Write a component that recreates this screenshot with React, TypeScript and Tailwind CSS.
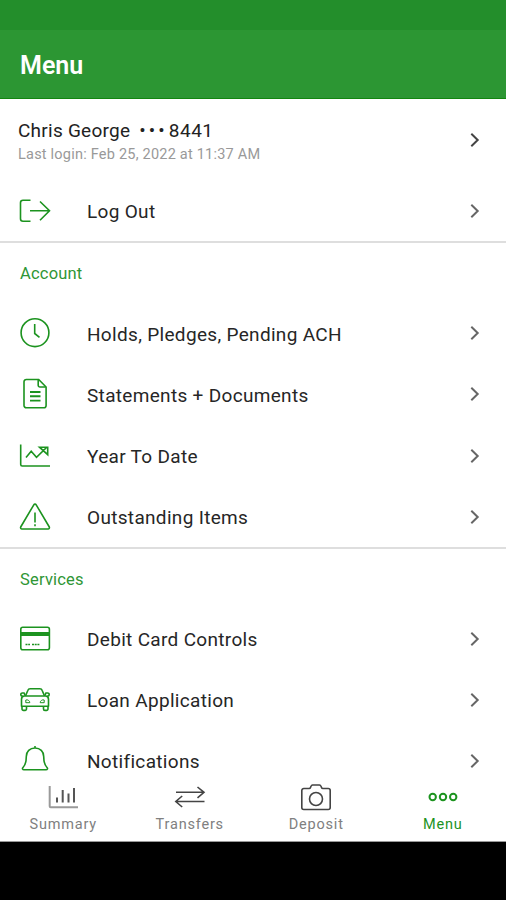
import React from "react";

type Item = {
  label: string;
  icon: React.ReactNode;
};

const svgProps = {
  width: 32,
  height: 32,
  viewBox: "0 0 32 32",
  fill: "none",
  stroke: "currentColor",
  strokeWidth: 1.6,
};

const LogOutIcon = () => (
  <svg {...svgProps}>
    <path d="M11.5 5.2H4a2.5 2.5 0 0 0-2.5 2.500v16A2.5 2.5 0 0 0 4 26.200h7.500" />
    <path d="M11 15.700h19.500M21 6.500l9.500 9.200-9.500 9.500" />
  </svg>
);

const ClockIcon = () => (
  <svg {...svgProps}>
    <circle cx="16" cy="15.700" r="13.900" />
    <path d="M15.700 7v9.500l4.800 3.800" />
  </svg>
);

const DocumentIcon = () => (
  <svg {...svgProps}>
    <path d="M19.700 1.500H7.300A2.300 2.300 0 0 0 5 3.800v23.700a2.300 2.300 0 0 0 2.300 2.300h17.500a2.300 2.300 0 0 0 2.300-2.300V9z" />
    <path d="M19.200 1.700v5.600a1.700 1.700 0 0 0 1.700 1.700h5.900" />
    <path d="M11 14h10.500M11 18.300h10.500M11 22.600h10.500" strokeWidth="1.900" />
  </svg>
);

const TrendIcon = () => (
  <svg {...svgProps}>
    <path d="M1.700 4.500v20a1.500 1.500 0 0 0 1.500 1.500H31" />
    <path d="M7 17.500l5.200-6.200 5.300 6L27.500 7.500M20.500 7.200h8.200v7.500z" />
  </svg>
);

const WarningIcon = () => (
  <svg {...svgProps} strokeLinejoin="round">
    <path d="M14.800 3.800a1.400 1.400 0 0 1 2.400 0L30.300 26a1.400 1.400 0 0 1-1.200 2H2.900a1.400 1.400 0 0 1-1.200-2z" />
    <path d="M16 11.500v10M16 23.300v2" />
  </svg>
);

const CardIcon = () => (
  <svg {...svgProps}>
    <rect x="1.800" y="4.200" width="28.600" height="22.500" rx="2" />
    <path d="M2 11h28.400" strokeWidth="4" />
    <path d="M6.500 21.500h4.500M13 21.500h7.500" strokeWidth="1.300" strokeDasharray="2 .7" />
  </svg>
);

const CarIcon = () => (
  <svg {...svgProps} strokeLinejoin="round">
    <path d="M6.500 12l2.300-5.500a2.500 2.500 0 0 1 2.400-1.700h9.600a2.500 2.500 0 0 1 2.400 1.700l2.300 5.500" />
    <path d="M5.500 12h21c1.700 0 3 1.300 3 3.300v7H2.500v-7c0-2 1.300-3.300 3-3.300z" />
    <path d="M6 11.500L5.200 9H3.400a1.500 1.500 0 0 0-1.600 1.500c0 1 .8 1.700 2.300 1.700M26 11.500l.8-2.500h1.800a1.500 1.500 0 0 1 1.600 1.500c0 1-.8 1.700-2.300 1.700" />
    <path d="M3 22.500V25a1.400 1.400 0 0 0 1.400 1.400h1.700A1.400 1.400 0 0 0 7.500 25v-2.500M24.500 22.500V25a1.400 1.400 0 0 0 1.400 1.400h1.700A1.400 1.400 0 0 0 29 25v-2.500" />
    <path d="M6.800 16v2.700h4a3 3 0 0 0-4-2.700zM25.200 16v2.700h-4a3 3 0 0 1 4-2.700z" strokeWidth="1" />
  </svg>
);

const BellIcon = () => (
  <svg {...svgProps} strokeLinejoin="round">
    <path d="M16 1v2.500M16 3c-5.200 0-8.700 3.400-8.700 8.500 0 6.300-1 8.700-3.300 11-1 1-.5 2.300 1 2.300h22c1.500 0 2-1.300 1-2.300-2.300-2.300-3.300-4.700-3.300-11C24.700 6.400 21.200 3 16 3z" />
  </svg>
);

const ChevronIcon = ({ className }: { className: string }) => (
  <svg
    width="10"
    height="16"
    viewBox="0 0 10 16"
    fill="none"
    stroke="currentColor"
    strokeWidth="2"
    className={className}
  >
    <path d="M1.300 1.800L7.700 8l-6.400 6.200" />
  </svg>
);

const accountItems: Item[] = [
  { label: "Holds, Pledges, Pending ACH", icon: <ClockIcon /> },
  { label: "Statements + Documents", icon: <DocumentIcon /> },
  { label: "Year To Date", icon: <TrendIcon /> },
  { label: "Outstanding Items", icon: <WarningIcon /> },
];

const serviceItems: Item[] = [
  { label: "Debit Card Controls", icon: <CardIcon /> },
  { label: "Loan Application", icon: <CarIcon /> },
  { label: "Notifications", icon: <BellIcon /> },
];

const tabs = [
  {
    label: "Summary",
    icon: (
      <svg {...svgProps}>
        <path d="M2.700 4v20.200a1 1 0 0 0 1 1H31" stroke="#9a9a9a" strokeWidth="2" />
        <path d="M10 20.500v-5M15.700 20.500V8M21.500 20.500v-9M27 20.500V6" stroke="#555" strokeWidth="2" />
      </svg>
    ),
  },
  {
    label: "Transfers",
    icon: (
      <svg {...svgProps} stroke="#444">
        <path d="M2 10.300h28M23.500 5l6.500 5.300-6.500 5.500" />
        <path d="M30.500 19.500H2M8.200 14l-6.400 5.500L8.200 25" />
      </svg>
    ),
  },
  {
    label: "Deposit",
    icon: (
      <svg {...svgProps} stroke="#444" strokeLinejoin="round">
        <path d="M3.800 6.500H9a1.500 1.500 0 0 0 1.500-1l.6-1.500a1.500 1.500 0 0 1 1.400-1h7a1.500 1.500 0 0 1 1.400 1l.6 1.500a1.500 1.500 0 0 0 1.500 1h5.200a2 2 0 0 1 2 2V25.500a2 2 0 0 1-2 2H3.800a2 2 0 0 1-2-2V8.500a2 2 0 0 1 2-2z" />
        <circle cx="16" cy="17" r="6.500" />
      </svg>
    ),
  },
  {
    label: "Menu",
    icon: (
      <svg {...svgProps} strokeWidth="2">
        <circle cx="5.700" cy="15" r="3.200" />
        <circle cx="16" cy="15" r="3.200" />
        <circle cx="26.200" cy="15" r="3.200" />
      </svg>
    ),
  },
];

function MenuRow({ label, icon }: Item) {
  return (
    <div className="flex h-[61.2px] shrink-0 items-center pl-[19px] pr-[26px]">
      <div className="w-[68px] text-[#1c931f]">{icon}</div>
      <div className="flex-1 pt-[3px] text-[19px] leading-7 tracking-[0.32px] text-[#262626]">{label}</div>
      <ChevronIcon className="text-[#666]" />
    </div>
  );
}

function SectionTitle({ children }: { children: string }) {
  return (
    <div className="flex h-[59.2px] shrink-0 items-center pl-5 pt-[3px] text-[16.5px] tracking-[0.2px] text-[#2f9635]">
      {children}
    </div>
  );
}

export default function App() {
  return (
    <div className="flex h-[900px] w-[506px] flex-col overflow-hidden bg-black font-['Roboto',sans-serif]">
      <div className="h-[30px] shrink-0 bg-[#238e2b]" />
      <header className="flex h-[69px] shrink-0 items-center border-b border-[#12850f] bg-[#2c9633] pl-5 pt-1 text-[25px] font-semibold text-white">
        Menu
      </header>
      <main className="flex h-[672px] shrink-0 flex-col overflow-hidden bg-white">
        <div className="flex h-[82px] shrink-0 items-center pl-[18px] pr-[26px]">
          <div className="flex-1 pt-1">
            <div className="mb-px flex items-baseline text-[19px] leading-6 tracking-[0.25px] text-[#222]">
              <span>Chris George</span>
              <span className="ml-[9px] mr-px tracking-[3.1px]">•••</span>
              <span className="tracking-[0.5px]">8441</span>
            </div>
            <div className="text-[14.5px] leading-[22px] tracking-[0.22px] text-[#999]">
              Last login: Feb 25, 2022 at 11:37 AM
            </div>
          </div>
          <ChevronIcon className="text-[#444]" />
        </div>
        <div className="-mt-[0.8px] border-b-2 border-[#dedede]">
          <MenuRow label="Log Out" icon={<LogOutIcon />} />
        </div>
        <SectionTitle>Account</SectionTitle>
        <div className="border-b-2 border-[#dedede]">
          {accountItems.map((item) => (
            <MenuRow key={item.label} {...item} />
          ))}
        </div>
        <SectionTitle>Services</SectionTitle>
        <div className="-mt-[0.6px]">
          {serviceItems.map((item) => (
            <MenuRow key={item.label} {...item} />
          ))}
        </div>
      </main>
      <nav className="grid h-[71px] shrink-0 grid-cols-4 border-b border-[#999] bg-white pt-[11px]">
        {tabs.map((tab) => (
          <div
            key={tab.label}
            className={
              tab.label === "Menu"
                ? "flex flex-col items-center text-[#1c931f]"
                : "flex flex-col items-center text-[#808080]"
            }
          >
            {tab.icon}
            <div className="text-[14.5px] leading-[22px] tracking-[0.8px]">{tab.label}</div>
          </div>
        ))}
      </nav>
    </div>
  );
}
